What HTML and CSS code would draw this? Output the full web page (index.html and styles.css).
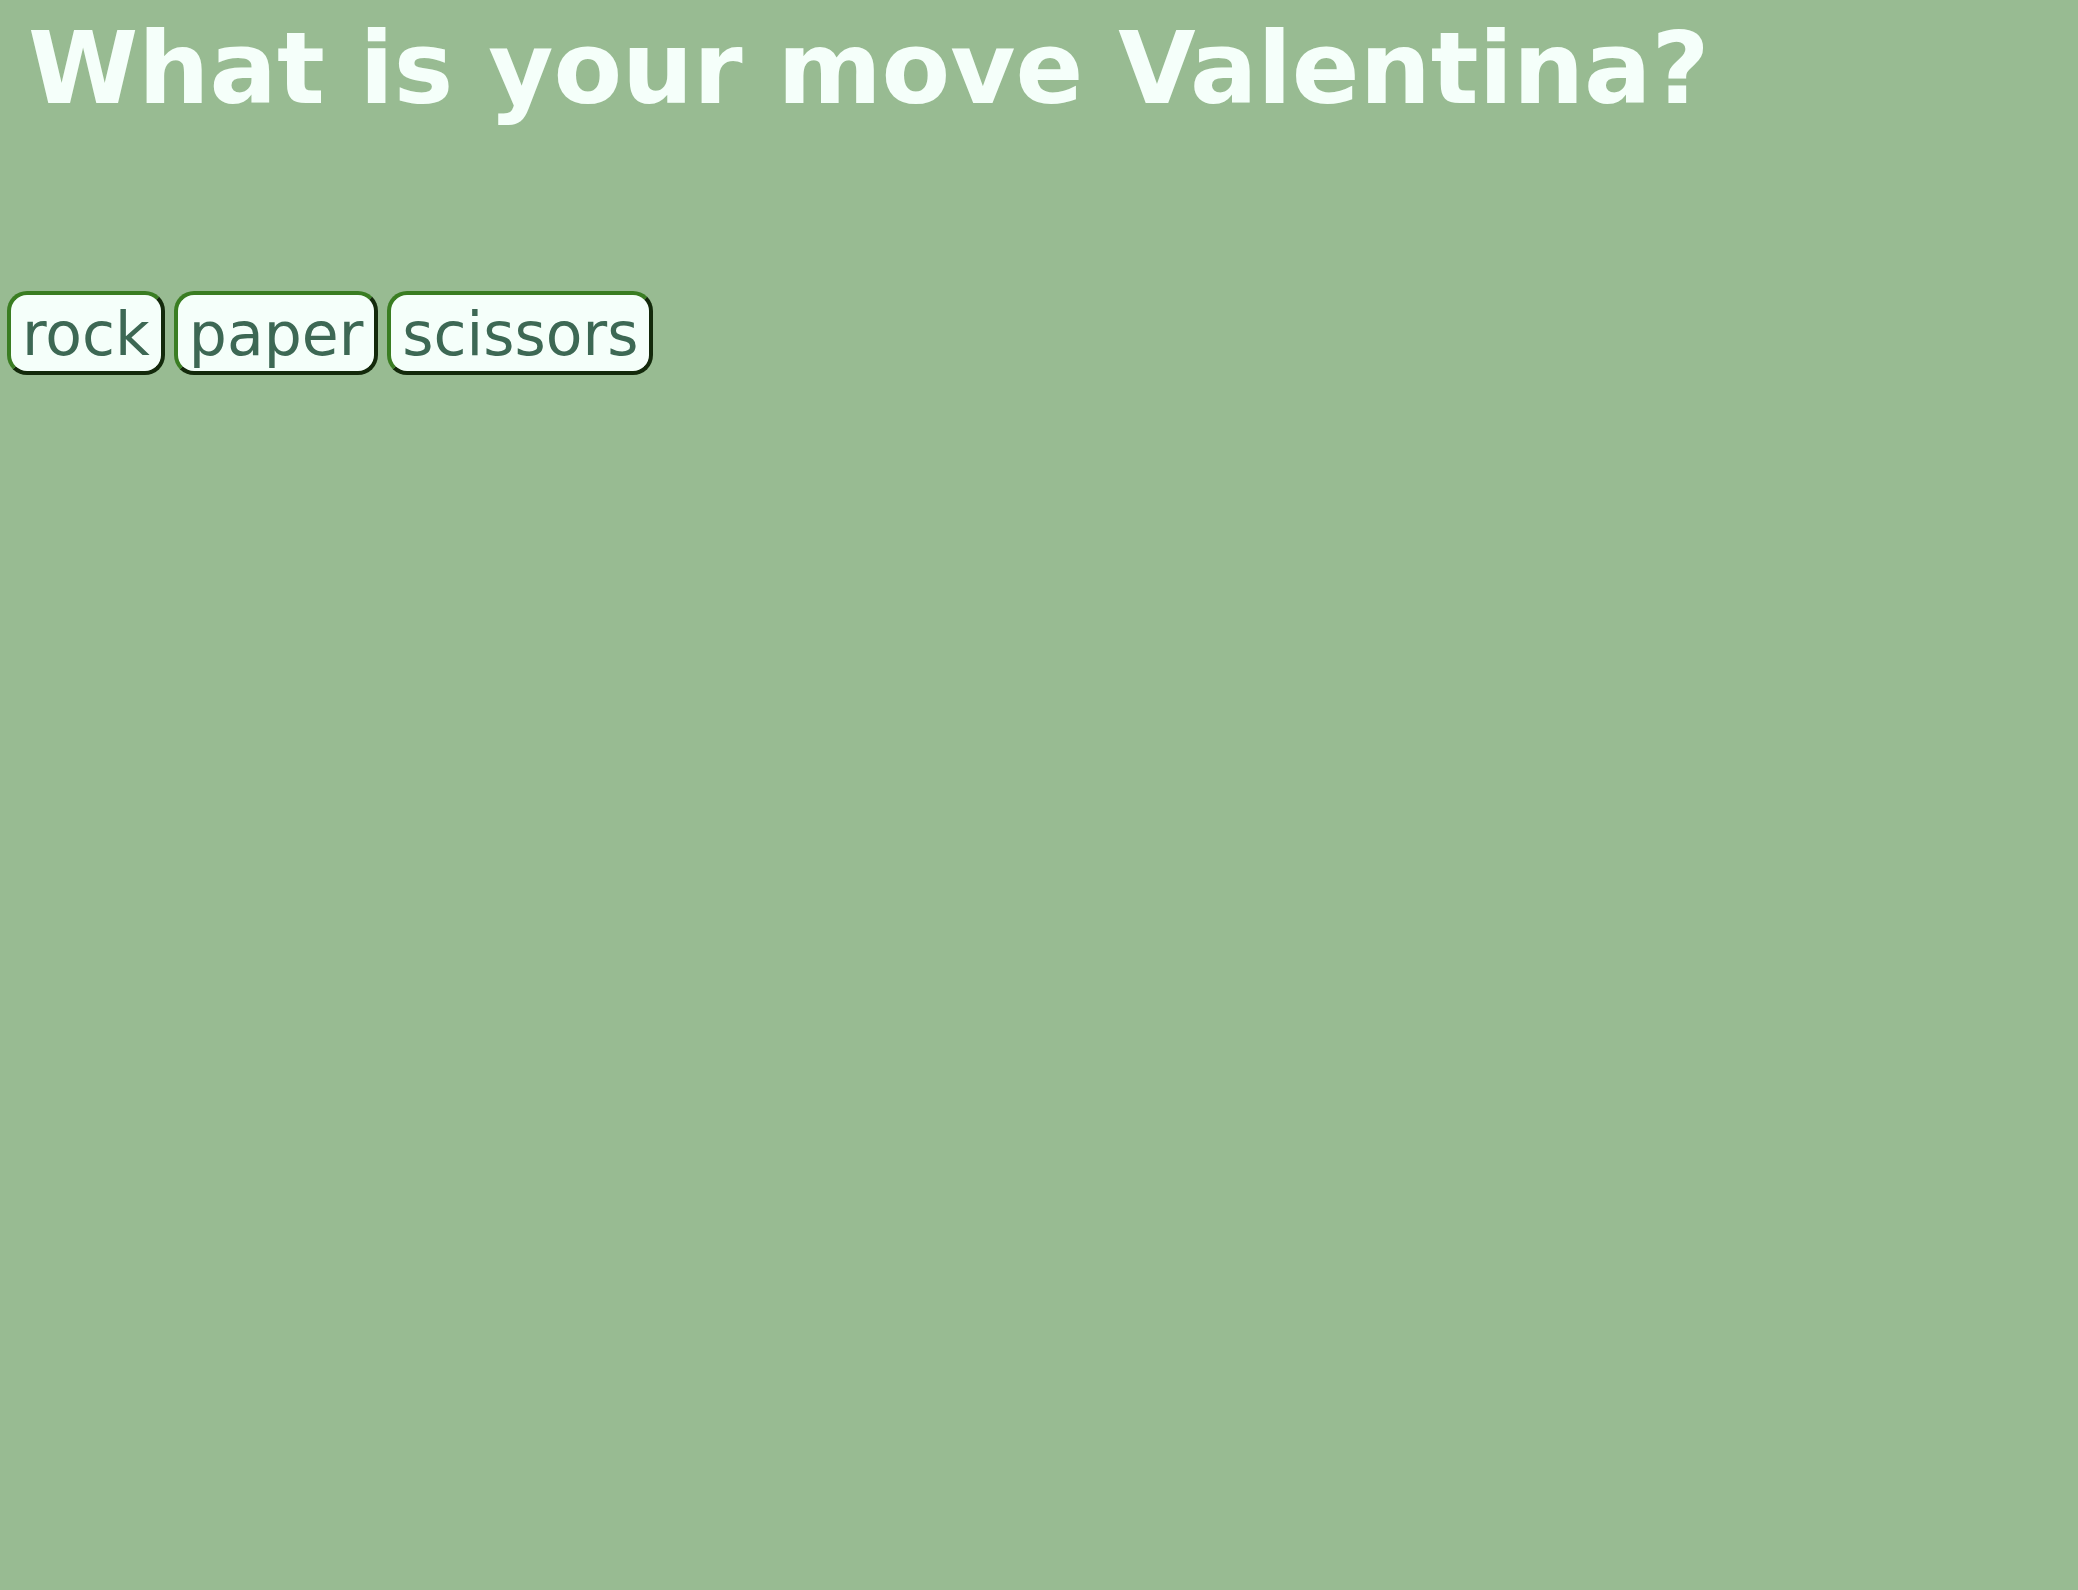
FILE: index.html
```html
<!DOCTYPE html>
<html lang="en">
<head>
<meta charset="utf-8">
<title>Rock Paper Scissors</title>
<link rel="stylesheet" href="styles.css">
</head>
<body>
<h1 class="title">What is your move Valentina?</h1>
<div class="moves">
  <button class="move">rock</button>
  <button class="move">paper</button>
  <button class="move">scissors</button>
</div>
</body>
</html>
```
FILE: styles.css
```css
html, body {
  background: #98bb92;
}
body {
  margin: 10px 0 0 0;
  font-family: "DejaVu Sans", Verdana, sans-serif;
}
.title {
  margin: 0;
  padding-left: 28px;
  font-size: 100px;
  font-weight: bold;
  color: #f5fffa;
  line-height: normal;
}
.moves {
  display: flex;
  gap: 9px;
  margin-top: 164px;
  padding-left: 7px;
}
.move {
  font-family: "DejaVu Sans", Verdana, sans-serif;
  font-size: 60px;
  line-height: normal;
  color: #3d6854;
  background: #f5fffa;
  border: 4px outset #3a7d22;
  border-radius: 20px;
  padding: 4px 11px 2px;
  margin: 0;
}
```
